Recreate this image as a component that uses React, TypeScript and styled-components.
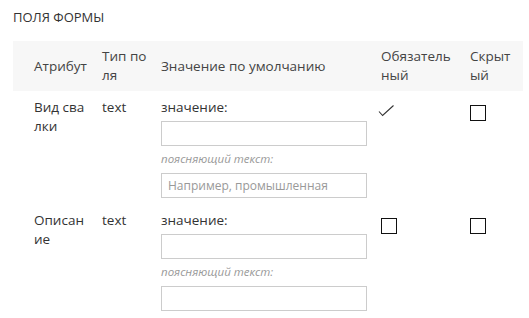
import React from "react";
import styled, { createGlobalStyle } from "styled-components";

const Global = createGlobalStyle`
  html, body { margin: 0; padding: 0; background: #fff; }
  body { font-family: "Open Sans", "Liberation Sans", sans-serif; color: #333; }
`;

const Page = styled.div`
  width: 529px;
  height: 318px;
  overflow: hidden;
  padding: 0 6px 0 13px;
  box-sizing: border-box;
`;

const Title = styled.h3`
  margin: 0;
  padding-top: 8px;
  height: 41px;
  box-sizing: border-box;
  font-size: 13px;
  line-height: 19px;
  font-weight: 400;
  color: #333;
  text-transform: uppercase;
`;

const COLS = "68px 59px 220px 89px 53px";
const PAD = [12, 10, 14, 14, 8];

const HeaderRow = styled.div`
  display: grid;
  grid-template-columns: ${COLS};
  align-items: center;
  background: #f7f7f7;
  padding: 6px 0 6px 21px;
  height: 50px;
  box-sizing: border-box;
`;

const HeadCell = styled.div<{ $pr: number }>`
  font-size: 13.5px;
  line-height: 19px;
  color: #444;
  word-break: break-all;
  padding-right: ${(p) => p.$pr}px;
`;

const BodyRow = styled.div`
  display: grid;
  grid-template-columns: ${COLS};
  align-items: start;
  padding: 7px 0 6px 21px;
`;

const Cell = styled.div<{ $pr: number }>`
  font-size: 13.5px;
  line-height: 19px;
  color: #333;
  word-break: break-all;
  padding-right: ${(p) => p.$pr}px;
`;

const ValueCell = styled.div`
  display: flex;
  flex-direction: column;
`;

const Label = styled.div`
  font-size: 13.5px;
  line-height: 19px;
  color: #333;
  margin-bottom: 4px;
`;

const Hint = styled.div`
  font-size: 11.5px;
  line-height: 16px;
  font-style: italic;
  color: #999;
  margin: 5px 0 6px;
`;

const Input = styled.input`
  box-sizing: border-box;
  width: 206px;
  height: 25px;
  border: 1px solid #ccc;
  border-radius: 0;
  padding: 0 6px;
  margin: 0;
  font-family: "Open Sans", "Liberation Sans", sans-serif;
  font-size: 12px;
  color: #333;
  background: #fff;
  outline: none;
  &::placeholder { color: #999; }
`;

const CheckCell = styled.div`
  padding-top: 7px;
  height: 16px;
`;

const Box = styled.span`
  display: block;
  width: 16px;
  height: 16px;
  box-sizing: border-box;
  border: 1px solid #111;
  background: #fff;
`;

const Tick = styled.svg`
  display: block;
  margin-left: -3px;
  margin-top: -1px;
`;

function Check({ checked }: { checked: boolean }) {
  return (
    <CheckCell>
      {checked ? (
        <Tick width="17" height="14" viewBox="0 0 17 14">
          <path d="M1 7.5 L4.6 11.5 L15.5 1.5" fill="none" stroke="#333" strokeWidth="1.1" />
        </Tick>
      ) : (
        <Box />
      )}
    </CheckCell>
  );
}

type Field = { name: string; type: string; placeholder: string; required: boolean; hidden: boolean };

const fields: Field[] = [
  { name: "Вид свалки", type: "text", placeholder: "Например, промышленная", required: true, hidden: false },
  { name: "Описание", type: "text", placeholder: "", required: false, hidden: false },
];

const headers = ["Атрибут", "Тип поля", "Значение по умолчанию", "Обязательный", "Скрытый"];

export default function App() {
  return (
    <Page>
      <Global />
      <Title>Поля формы</Title>
      <HeaderRow>
        {headers.map((h, i) => (
          <HeadCell key={h} $pr={PAD[i]}>{h}</HeadCell>
        ))}
      </HeaderRow>
      {fields.map((f) => (
        <BodyRow key={f.name}>
          <Cell $pr={PAD[0]}>{f.name}</Cell>
          <Cell $pr={PAD[1]}>{f.type}</Cell>
          <ValueCell>
            <Label>значение:</Label>
            <Input />
            <Hint>поясняющий текст:</Hint>
            <Input placeholder={f.placeholder} />
          </ValueCell>
          <Check checked={f.required} />
          <Check checked={f.hidden} />
        </BodyRow>
      ))}
    </Page>
  );
}
